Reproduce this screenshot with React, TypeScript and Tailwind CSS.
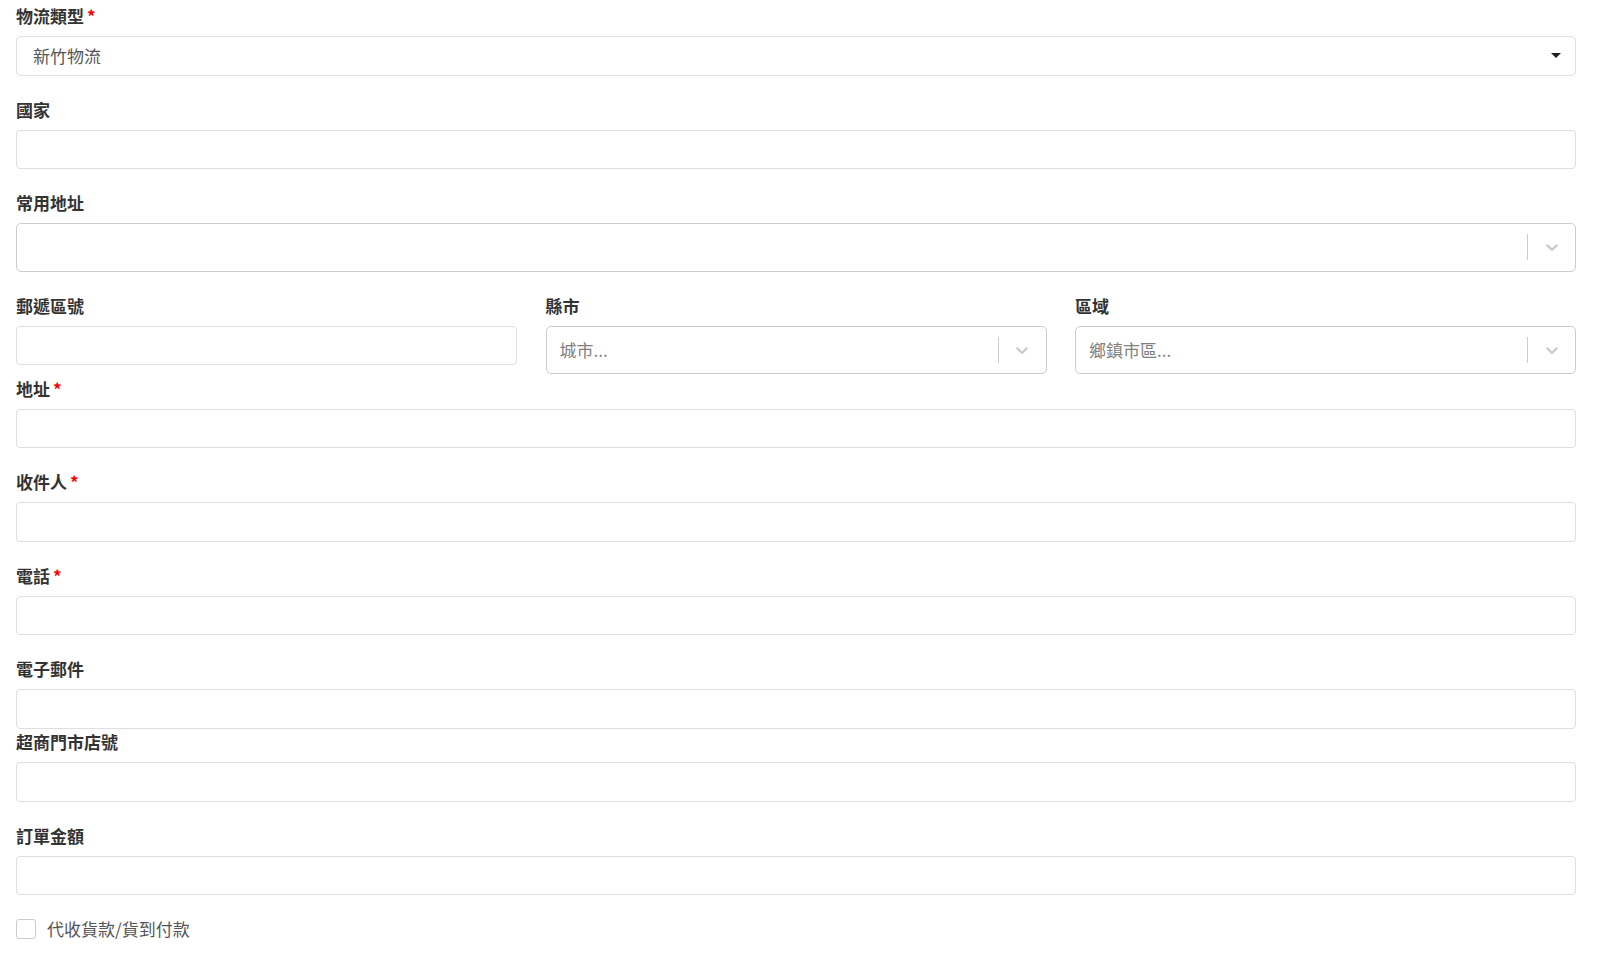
import React from "react";

const font = { fontFamily: '"Noto Sans CJK TC", "Noto Sans", sans-serif' };

function Label({ text, required }: { text: string; required?: boolean }) {
    return (
        <label className="block text-[17px] leading-[24px] font-bold text-[#333] mb-[8px]">
            {text}
            {required && <span className="ml-[3px] text-[#ff0000]">*</span>}
        </label>
    );
}

function TextInput() {
    return (
        <div className="h-[39.5px] w-full rounded-[4px] border border-[#dedede] bg-white" />
    );
}

function Chevron() {
    return (
        <svg width="20" height="20" viewBox="0 0 20 20" fill="#cccccc">
            <path d="M4.516 7.548c0.436-0.446 1.043-0.481 1.576 0l3.908 3.747 3.908-3.747c0.533-0.481 1.141-0.446 1.574 0 0.436 0.445 0.408 1.197 0 1.615-0.406 0.418-4.695 4.502-4.695 4.502-0.217 0.223-0.502 0.335-0.787 0.335s-0.57-0.112-0.789-0.335c0 0-4.287-4.084-4.695-4.502s-0.436-1.17 0-1.615z" />
        </svg>
    );
}

function ReactSelect({ placeholder }: { placeholder?: string }) {
    return (
        <div className="flex h-[48.5px] w-full items-center rounded-[5px] border border-[#cccccc] bg-white">
            <div className="flex-1 pl-[13px] text-[17px] text-[#808080]">{placeholder}</div>
            <span className="h-[26px] w-px bg-[#cccccc]" />
            <div className="flex w-[47px] items-center justify-center">
                <Chevron />
            </div>
        </div>
    );
}

export default function App() {
    return (
        <div className="min-h-screen bg-white pt-[4px] pl-[16px] pr-[24px]" style={font}>
            <div className="mb-[22px]">
                <Label text="物流類型" required />
                <div className="flex h-[39.5px] w-full items-center justify-between rounded-[4px] border border-[#dedede] bg-white pl-[16px] pr-[14px]">
                    <span className="text-[17px] text-[#555]">新竹物流</span>
                    <svg width="10" height="5" viewBox="0 0 10 5">
                        <path d="M0 0h10L5 5z" fill="#222" />
                    </svg>
                </div>
            </div>

            <div className="mb-[22px]">
                <Label text="國家" />
                <TextInput />
            </div>

            <div className="mb-[22px]">
                <Label text="常用地址" />
                <ReactSelect />
            </div>

            <div className="mb-[2.5px] grid grid-cols-3 gap-x-[28.5px]">
                <div>
                    <Label text="郵遞區號" />
                    <TextInput />
                </div>
                <div>
                    <Label text="縣市" />
                    <ReactSelect placeholder="城市..." />
                </div>
                <div>
                    <Label text="區域" />
                    <ReactSelect placeholder="鄉鎮市區..." />
                </div>
            </div>

            <div className="mb-[22px]">
                <Label text="地址" required />
                <TextInput />
            </div>

            <div className="mb-[22px]">
                <Label text="收件人" required />
                <TextInput />
            </div>

            <div className="mb-[22px]">
                <Label text="電話" required />
                <TextInput />
            </div>

            <div className="mb-[1.5px]">
                <Label text="電子郵件" />
                <TextInput />
            </div>

            <div className="mb-[22px]">
                <Label text="超商門市店號" />
                <TextInput />
            </div>

            <div className="mb-[22px]">
                <Label text="訂單金額" />
                <TextInput />
            </div>

            <label className="flex h-[24px] items-center gap-[11px]">
                <span className="h-[20px] w-[20px] rounded-[3px] border border-[#cccccc] bg-white" />
                <span className="text-[17px] text-[#555]">代收貨款/貨到付款</span>
            </label>
        </div>
    );
}
